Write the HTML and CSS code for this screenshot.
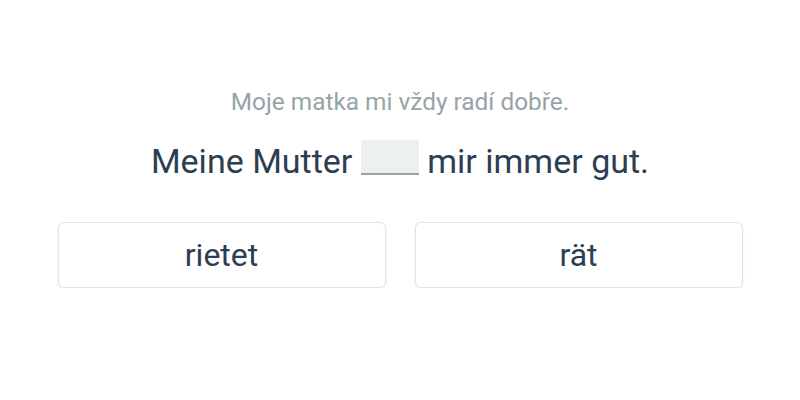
FILE: index.html
```html
<!DOCTYPE html>
<html lang="cs">
  <head>
    <meta charset="UTF-8" />
    <meta name="viewport" content="width=device-width, initial-scale=1.0" />
    <title>Cvičení</title>
    <link rel="stylesheet" href="styles.css">
  </head>
  <body>
    <div class="exercise flex column align">
      <p class="hint">Moje matka mi vždy radí dobře.</p>
      <p class="sentence">Meine Mutter <span class="blank"></span> mir immer gut.</p>
      <div class="choices">
        <button class="choice">rietet</button>
        <button class="choice">rät</button>
      </div>
    </div>
  </body>
</html>
```

FILE: styles.css
```css
* {
  margin: 0;
  padding: 0;
  box-sizing: border-box;
}
body {
  background-color: #fff;
  font-family: Roboto, "Noto Sans", sans-serif;
}
.flex {
  display: flex;
}
.column {
  flex-direction: column;
}
.align {
  align-items: center;
}

.exercise {
  padding-top: 88px;
}
.exercise .hint {
  font-size: 24.4px;
  line-height: 28px;
  color: #95a5a6;
}
.exercise .sentence {
  margin-top: 23px;
  font-size: 34px;
  line-height: 44px;
  color: #2c3e50;
}
.exercise .sentence .blank {
  display: inline-block;
  width: 58px;
  height: 35px;
  vertical-align: -2px;
  background-color: #ecf0f1;
  border-bottom: 2px solid #95a5a6;
}
.exercise .choices {
  margin-top: 39px;
  width: 685px;
  display: grid;
  grid-template-columns: 1fr 1fr;
  gap: 29px;
}
.exercise .choices .choice {
  height: 66px;
  background-color: #fff;
  border: 1px solid #e3e3e3;
  border-radius: 6px;
  box-shadow: 0 1px 3px rgba(0, 0, 0, 0.08);
  font-family: Roboto, "Noto Sans", sans-serif;
  font-size: 32px;
  color: #2c3e50;
}
```
